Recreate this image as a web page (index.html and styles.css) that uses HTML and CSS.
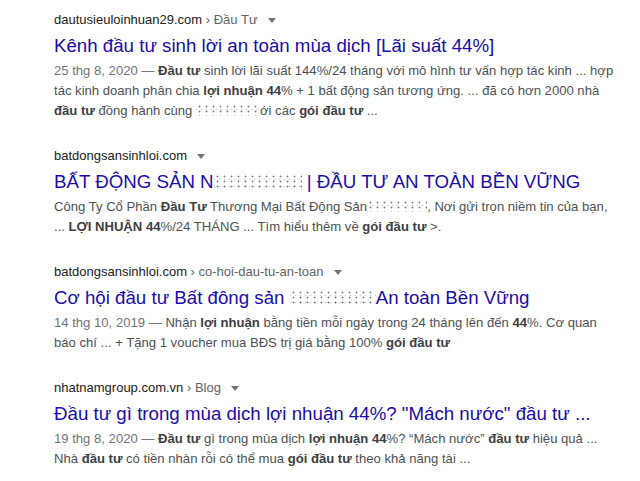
FILE: index.html
```html
<!DOCTYPE html>
<html lang="vi">
<head>
<meta charset="utf-8">
<title>Kết quả tìm kiếm</title>
<link rel="stylesheet" href="styles.css">
</head>
<body>
<main class="results">
  <div class="result">
    <div class="cite">dautusieuloinhuan29.com<span class="crumb"> › Đầu Tư</span><span class="caret"></span></div>
    <div class="title">Kênh đầu tư sinh lời an toàn mùa dịch [Lãi suất 44%]</div>
    <div class="snippet"><span class="date">25 thg 8, 2020 — </span><b>Đầu tư</b> sinh lời lãi suất 144%/24 tháng với mô hình tư vấn hợp tác kinh ... hợp<br>tác kinh doanh phân chia <b>lợi nhuận 44</b>% + 1 bất động sản tương ứng. ... đã có hơn 2000 nhà<br><b>đầu tư</b> đồng hành cùng <span class="blur w60"></span>ới các <b>gói đầu tư</b> ...</div>
  </div>
  <div class="result">
    <div class="cite">batdongsansinhloi.com<span class="caret"></span></div>
    <div class="title">BẤT ĐỘNG SẢN N<span class="blur w100 big"></span> | ĐẦU TƯ AN TOÀN BỀN VỮNG</div>
    <div class="snippet">Công Ty Cổ Phần <b>Đầu Tư</b> Thương Mại Bất Động Sản<span class="blur w42"></span>, Nơi gửi trọn niềm tin của bạn,<br>... <b>LỢI NHUẬN 44</b>%/24 THÁNG ... Tìm hiểu thêm về <b>gói đầu tư</b> &gt;.</div>
  </div>
  <div class="result">
    <div class="cite">batdongsansinhloi.com<span class="crumb"> › co-hoi-dau-tu-an-toan</span><span class="caret"></span></div>
    <div class="title">Cơ hội đầu tư Bất đông sản <span class="blur w86 big"></span>An toàn Bền Vững</div>
    <div class="snippet"><span class="date">14 thg 10, 2019 — </span>Nhận <b>lợi nhuận</b> bằng tiền mỗi ngày trong 24 tháng lên đến <b>44</b>%. Cơ quan<br>báo chí ... + Tặng 1 voucher mua BĐS trị giá bằng 100% <b>gói đầu tư</b></div>
  </div>
  <div class="result">
    <div class="cite">nhatnamgroup.com.vn<span class="crumb"> › Blog</span><span class="caret"></span></div>
    <div class="title">Đầu tư gì trong mùa dịch lợi nhuận 44%? "Mách nước" đầu tư ...</div>
    <div class="snippet"><span class="date">19 thg 8, 2020 — </span><b>Đầu tư</b> gì trong mùa dịch <b>lợi nhuận 44</b>%? “Mách nước” <b>đầu tư</b> hiệu quả ...<br>Nhà <b>đầu tư</b> có tiền nhàn rỗi có thể mua <b>gói đầu tư</b> theo khả năng tài ...</div>
  </div>
</main>
</body>
</html>
```
FILE: styles.css
```css
* { box-sizing: border-box; }
html, body { margin: 0; padding: 0; background: #fff; }
body {
  width: 640px;
  height: 481px;
  overflow: hidden;
  font-family: "Liberation Sans", Arial, sans-serif;
}
.results {
  display: flex;
  flex-direction: column;
  gap: 24px;
  padding: 9px 0 0 54px;
}
.result { display: flex; flex-direction: column; }
.cite {
  font-size: 13px;
  line-height: 22px;
  color: #202124;
  white-space: nowrap;
}
.crumb { color: #5f6368; }
.caret {
  display: inline-block;
  width: 0;
  height: 0;
  margin-left: 10px;
  vertical-align: middle;
  border-left: 4px solid transparent;
  border-right: 4px solid transparent;
  border-top: 5px solid #70757a;
}
.title {
  margin-top: 1px;
  font-size: 18.7px;
  line-height: 28px;
  color: #1a0dab;
  white-space: nowrap;
}
.snippet {
  margin-top: 1px;
  font-size: 13.1px;
  line-height: 20px;
  color: #4d5156;
  white-space: nowrap;
}
.snippet b { color: #3c4043; font-weight: bold; }
.date { color: #70757a; }
.blur {
  display: inline-block;
  height: 12px;
  vertical-align: -1px;
  background-image:
    radial-gradient(circle, rgba(30,30,50,0.6) 0.7px, transparent 1.2px),
    radial-gradient(circle, rgba(120,120,140,0.3) 0.7px, transparent 1.2px);
  background-size: 7px 5px, 5px 7px;
  background-position: 0 0, 3px 2px;
}
.blur.big { height: 16px; vertical-align: -2px; }
.w42 { width: 60px; }
.w60 { width: 64px; }
.w86 { width: 86px; }
.w100 { width: 88px; }
```
